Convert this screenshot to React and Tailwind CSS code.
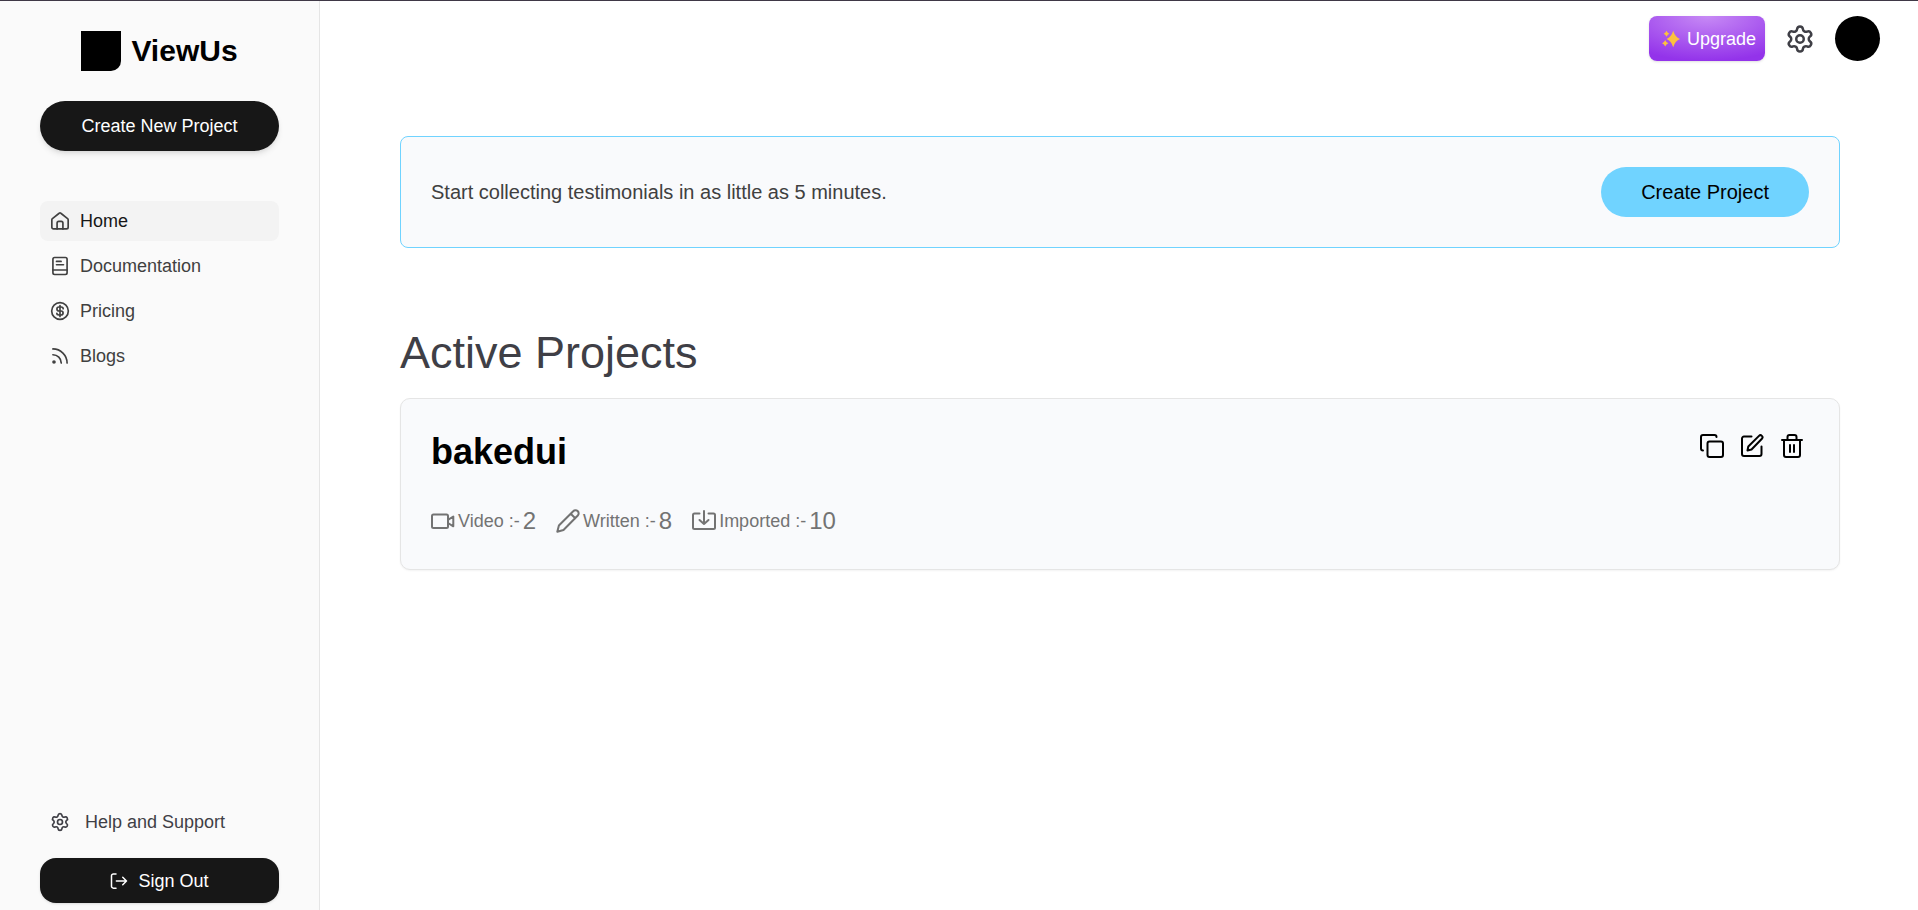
import React from "react";

function Icon({ className, stroke = 1.5, children }) {
  return (
    <svg
      viewBox="0 0 24 24"
      fill="none"
      stroke="currentColor"
      strokeWidth={stroke}
      strokeLinecap="round"
      strokeLinejoin="round"
      aria-hidden="true"
      className={className}
    >
      {children}
    </svg>
  );
}

const gearPath =
  "M9.671 4.136a2.34 2.34 0 0 1 4.659 0 2.34 2.34 0 0 0 3.319 1.915 2.34 2.34 0 0 1 2.33 4.033 2.34 2.34 0 0 0 0 3.831 2.34 2.34 0 0 1-2.33 4.033 2.34 2.34 0 0 0-3.319 1.915 2.34 2.34 0 0 1-4.659 0 2.34 2.34 0 0 0-3.32-1.915 2.34 2.34 0 0 1-2.33-4.033 2.34 2.34 0 0 0 0-3.831A2.34 2.34 0 0 1 6.35 6.051a2.34 2.34 0 0 0 3.319-1.915";

function GearIcon({ className, stroke }) {
  return (
    <Icon className={className} stroke={stroke}>
      <path d={gearPath} />
      <circle cx="12" cy="12" r="3" />
    </Icon>
  );
}

function HomeIcon() {
  return (
    <Icon className="size-5 shrink-0" stroke={2}>
      <path d="M2.200 10.600V19.500a2 2 0 0 0 2 2h15.600a2 2 0 0 0 2-2v-8.900a2 2 0 0 0-.7-1.500L13 2.700a1.500 1.500 0 0 0-2 0L2.900 9.100a2 2 0 0 0-.7 1.500Z" />
      <path d="M8.500 21.500V14.500a2 2 0 0 1 2-2h3a2 2 0 0 1 2 2v7" />
    </Icon>
  );
}

function BookIcon() {
  return (
    <Icon className="size-5 shrink-0" stroke={2}>
      <rect x="3.500" y="1.800" width="17" height="20.400" rx="2" />
      <path d="M3.500 16.800h17M7.800 6.500h5.500M7.800 10.500h8.400" />
    </Icon>
  );
}

function DollarIcon() {
  return (
    <Icon className="size-5 shrink-0" stroke={2}>
      <circle cx="12" cy="12" r="10" />
      <path d="M15.800 9.200c0-1.200-1.100-2-2.500-2h-2.600a2.400 2.400 0 0 0 0 4.800h2.600a2.400 2.400 0 0 1 0 4.800h-2.600c-1.400 0-2.500-.8-2.500-2M12 5.500v13" />
    </Icon>
  );
}

function FeedIcon() {
  return (
    <Icon className="size-5 shrink-0" stroke={2}>
      <path d="M3.500 10.500a10 10 0 0 1 10 10M3.500 3.500a17 17 0 0 1 17 17" />
      <circle cx="4.800" cy="19.200" r="1.200" fill="currentColor" />
    </Icon>
  );
}

function SignOutIcon() {
  return (
    <Icon className="size-[18px] shrink-0" stroke={2}>
      <path d="M8 2.500H4.500A2.500 2.500 0 0 0 2 5v14a2.500 2.500 0 0 0 2.500 2.500H8M8.500 12h13.500M17 7l5 5-5 5" />
    </Icon>
  );
}

function SparklesIcon() {
  return (
    <svg viewBox="0 0 18 18" fill="#fcc13e" aria-hidden="true" className="size-[18px] shrink-0">
      <path d="M11.200 .8Q13 7 18 9Q13 11 11.200 17.200Q9.400 11 4.500 9Q9.400 7 11.200 .8Z" />
      <path d="M4.500 .8Q5.200 3 7.300 3.800Q5.200 4.600 4.500 6.800Q3.800 4.600 1.700 3.800Q3.800 3 4.500 .8Z" />
      <path d="M3.200 10Q4 12.300 6.400 13.200Q4 14.100 3.200 16.500Q2.400 14.100 0 13.200Q2.400 12.300 3.200 10Z" />
    </svg>
  );
}

function VideoIcon() {
  return (
    <Icon className="size-6 shrink-0" stroke={2}>
      <rect x="1" y="5.500" width="16" height="13.500" rx="1.500" />
      <path d="M17 10.800l5.300-3.300v9.800L17 14" />
    </Icon>
  );
}

function PencilIcon() {
  return (
    <Icon className="size-6 shrink-0" stroke={2}>
      <path d="M1.300 22.700l1.600-6.200L17.200 2.200a2.700 2.700 0 0 1 4.600 4.300L7.500 21zM14.700 4.700l4.600 4.600" />
    </Icon>
  );
}

function ImportIcon() {
  return (
    <Icon className="size-6 shrink-0" stroke={2}>
      <path d="M7.500 4.500h-5A1.500 1.500 0 0 0 1 6v12.500A1.500 1.500 0 0 0 2.500 20h19a1.500 1.500 0 0 0 1.500-1.500V6a1.500 1.500 0 0 0-1.500-1.500h-5M12 2v13M7.500 11l4.500 4 4.500-4" />
    </Icon>
  );
}

function CopyIcon() {
  return (
    <Icon className="size-6" stroke={2}>
      <rect x="7.500" y="7.500" width="15.500" height="15.500" rx="2" />
      <path d="M3 16.500A2 2 0 0 1 1 14.500V3a2 2 0 0 1 2-2h11.500a2 2 0 0 1 2 2" />
    </Icon>
  );
}

function EditIcon() {
  return (
    <Icon className="size-6" stroke={2}>
      <path d="M11.500 2.500H4A2 2 0 0 0 2 4.500v15.500a2 2 0 0 0 2 2h15.500a2 2 0 0 0 2-2v-7.500" />
      <path d="M7.500 16.500l.8-4L19 1.900a1.900 1.900 0 0 1 2.900 2.800L11.500 15.500z" />
    </Icon>
  );
}

function TrashIcon() {
  return (
    <Icon className="size-6" stroke={2}>
      <path d="M2 6h20M4 6v15a2 2 0 0 0 2 2h12a2 2 0 0 0 2-2V6M7.500 5.500V3a2 2 0 0 1 2-2h5a2 2 0 0 1 2 2v2.500M10 11v7M14 11v7" />
    </Icon>
  );
}

const links = [
  { label: "Home", Glyph: HomeIcon, active: true },
  { label: "Documentation", Glyph: BookIcon },
  { label: "Pricing", Glyph: DollarIcon },
  { label: "Blogs", Glyph: FeedIcon },
];

const stats = [
  { label: "Video", count: 2, Glyph: VideoIcon },
  { label: "Written", count: 8, Glyph: PencilIcon },
  { label: "Imported", count: 10, Glyph: ImportIcon },
];

const actions = [
  { label: "Copy link", Glyph: CopyIcon },
  { label: "Edit project", Glyph: EditIcon },
  { label: "Delete project", Glyph: TrashIcon },
];

function Sidebar() {
  return (
    <aside className="flex w-80 shrink-0 flex-col border-r border-[#e5e5e5] bg-[#fafafa] px-10 pt-[30px] pb-[7px]">
      <a href="#" className="flex items-center justify-center gap-[10px] text-black">
        <span className="size-10 rounded-br-[10px] bg-black" />
        <span className="text-[30px] leading-10 font-bold">ViewUs</span>
      </a>
      <button
        type="button"
        className="mt-[30px] h-[50px] rounded-full bg-[#171717] text-lg text-white shadow-md"
      >
        Create New Project
      </button>
      <nav className="mt-[50px] flex flex-col gap-[5px]">
        {links.map(({ label, Glyph, active }) => (
          <a
            key={label}
            href="#"
            className={
              active
                ? "flex h-10 items-center gap-[10px] rounded-lg bg-[#f3f3f3] px-[10px] text-lg text-[#171717]"
                : "flex h-10 items-center gap-[10px] rounded-lg px-[10px] text-lg text-[#404040]"
            }
          >
            <span className="text-[#404040]">
              <Glyph />
            </span>
            {label}
          </a>
        ))}
      </nav>
      <a href="#" className="mt-auto flex h-10 items-center gap-[15px] px-[10px] text-lg text-[#3f3f46]">
        <GearIcon className="size-5 shrink-0" stroke={2} />
        Help and Support
      </a>
      <button
        type="button"
        className="mt-4 flex h-[45px] items-center justify-center gap-[10px] rounded-2xl bg-[#171717] text-lg text-white shadow-sm"
      >
        <SignOutIcon />
        Sign Out
      </button>
    </aside>
  );
}

export default function App() {
  return (
    <div className="flex min-h-screen flex-col border-t border-[#3f3846] bg-white font-['Liberation_Sans',Arial,sans-serif]">
      <div className="flex flex-1">
        <Sidebar />
        <div className="flex min-w-0 flex-1 flex-col">
          <header className="flex items-center justify-end gap-5 pt-[15px] pr-[38px]">
            <button
              type="button"
              className="flex h-[45px] items-center gap-[7px] rounded-lg bg-[radial-gradient(ellipse_90%_100%_at_50%_0%,#c78af5,#9333ea)] pr-[9px] pl-[13px] text-lg text-white shadow-sm"
            >
              <SparklesIcon />
              Upgrade
            </button>
            <button type="button" aria-label="Settings" className="text-[#3f3f46]">
              <GearIcon className="size-[30px]" stroke={2} />
            </button>
            <button type="button" aria-label="Account" className="size-[45px] rounded-full bg-black" />
          </header>
          <main className="pt-[75px] pr-[78px] pl-20">
            <section className="flex items-center justify-between rounded-lg border border-[#70d3ff] bg-[#f9fafc] p-[30px]">
              <p className="text-xl text-[#404040]">
                Start collecting testimonials in as little as 5 minutes.
              </p>
              <button
                type="button"
                className="h-[50px] rounded-full bg-[#70d3ff] px-10 text-xl text-black"
              >
                Create Project
              </button>
            </section>
            <h1 className="mt-20 text-[45px] leading-[50px] text-[#3f3f46]">Active Projects</h1>
            <article className="mt-5 rounded-[10px] border border-[#e5e5e5] bg-[#f9fafc] px-[30px] pt-[30px] pb-8 shadow-xs">
              <div className="flex items-start justify-between">
                <h2 className="text-4xl leading-[46px] font-bold text-black">bakedui</h2>
                <div className="flex gap-4 pt-[5px] pr-[5px] text-black">
                  {actions.map(({ label, Glyph }) => (
                    <button key={label} type="button" aria-label={label}>
                      <Glyph />
                    </button>
                  ))}
                </div>
              </div>
              <ul className="mt-[30px] flex items-center gap-5 text-[#737373]">
                {stats.map(({ label, count, Glyph }) => (
                  <li key={label} className="flex items-center gap-[3px]">
                    <Glyph />
                    <span className="flex items-center gap-[3px] text-lg">
                      {label} :-
                      <span className="text-2xl">{count}</span>
                    </span>
                  </li>
                ))}
              </ul>
            </article>
          </main>
        </div>
      </div>
    </div>
  );
}
